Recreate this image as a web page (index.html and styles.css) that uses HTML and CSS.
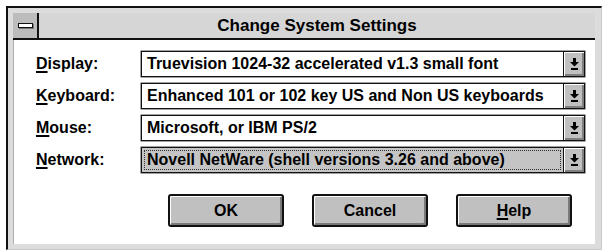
FILE: index.html
```html
<!DOCTYPE html>
<html lang="en">
<head>
    <meta charset="UTF-8">
    <title>Change System Settings</title>
    <link rel="stylesheet" href="styles.css">
</head>
<body>

<div class="window">
    <!-- Title bar -->
    <div class="titlebar">
        <div class="sysmenu"><span class="sysbar"></span></div>
        <div class="title">Change System Settings</div>
    </div>

    <div class="client">
        <div class="fields">
            <label class="label"><u>D</u>isplay:</label>
            <div class="combo">
                <div class="value">Truevision 1024-32 accelerated v1.3 small font</div>
                <div class="drop"><svg width="9" height="12" viewBox="0 0 9 12"><rect x="3" y="0" width="3" height="4" fill="#000"/><polygon points="0,4 9,4 4.5,8.5" fill="#000"/><rect x="1" y="10" width="7" height="2" fill="#000"/></svg></div>
            </div>

            <label class="label"><u>K</u>eyboard:</label>
            <div class="combo">
                <div class="value">Enhanced 101 or 102 key US and Non US keyboards</div>
                <div class="drop"><svg width="9" height="12" viewBox="0 0 9 12"><rect x="3" y="0" width="3" height="4" fill="#000"/><polygon points="0,4 9,4 4.5,8.5" fill="#000"/><rect x="1" y="10" width="7" height="2" fill="#000"/></svg></div>
            </div>

            <label class="label"><u>M</u>ouse:</label>
            <div class="combo">
                <div class="value">Microsoft, or IBM PS/2</div>
                <div class="drop"><svg width="9" height="12" viewBox="0 0 9 12"><rect x="3" y="0" width="3" height="4" fill="#000"/><polygon points="0,4 9,4 4.5,8.5" fill="#000"/><rect x="1" y="10" width="7" height="2" fill="#000"/></svg></div>
            </div>

            <label class="label"><u>N</u>etwork:</label>
            <div class="combo">
                <div class="value focused">Novell NetWare (shell versions 3.26 and above)</div>
                <div class="drop"><svg width="9" height="12" viewBox="0 0 9 12"><rect x="3" y="0" width="3" height="4" fill="#000"/><polygon points="0,4 9,4 4.5,8.5" fill="#000"/><rect x="1" y="10" width="7" height="2" fill="#000"/></svg></div>
            </div>
        </div>

        <div class="buttons">
            <button class="btn default">OK</button>
            <button class="btn">Cancel</button>
            <button class="btn"><u>H</u>elp</button>
        </div>
    </div>
</div>

</body>
</html>
```

FILE: styles.css
```css
body {
    margin: 0;
    background: #fff;
    font-family: "Liberation Sans", Arial, sans-serif;
    font-weight: bold;
    font-size: 16px;
    color: #000;
}

.window {
    margin: 6px 0 0 6px;
    width: 596px;
    height: 244px;
    box-sizing: border-box;
    background: #dcdcdc;
    border-top: 2px solid #111;
    border-left: 2px solid #111;
    border-right: 1px solid #c8c8c8;
    border-bottom: 1px solid #c8c8c8;
    padding: 5px 6px 5px 5px;
    display: flex;
    flex-direction: column;
}

/* Title bar */
.titlebar {
    height: 25px;
    display: flex;
    background: #d6d6d6;
    border-bottom: 2px solid #111;
}

.sysmenu {
    width: 24px;
    background: #bcbcbc;
    border-right: 2px solid #111;
    display: flex;
    align-items: center;
    justify-content: center;
}

.sysbar {
    width: 13px;
    height: 3px;
    background: #fff;
    border: 1px solid #111;
    box-shadow: 1px 1px 0 #777;
}

.title {
    flex: 1;
    text-align: center;
    line-height: 25px;
    font-size: 17px;
}

/* Client area */
.client {
    flex: 1;
    background: #fff;
    border-left: 1px solid #b0b0b0;
    padding: 11px 0 0 22px;
}

.fields {
    display: grid;
    grid-template-columns: 105px 444px;
    grid-auto-rows: 26px;
    row-gap: 6px;
}

.label {
    display: flex;
    align-items: center;
}

u {
    text-decoration-thickness: 2px;
    text-underline-offset: 2px;
}

.combo {
    display: flex;
    border: 1px solid #111;
    box-shadow: 0 0 0 0.5px #444;
}

.value {
    flex: 1;
    padding-left: 5px;
    display: flex;
    align-items: center;
    white-space: nowrap;
}

.value.focused {
    background: #c4c4c4;
    outline: 1px dotted #333;
    outline-offset: -3px;
}

.drop {
    width: 21px;
    border-left: 1px solid #111;
    background: #c0c0c0;
    box-shadow: inset 1px 1px 0 #fff, inset -2px -2px 0 #808080;
    display: flex;
    align-items: center;
    justify-content: center;
    padding-bottom: 1px;
    box-sizing: border-box;
}

/* Buttons */
.buttons {
    display: flex;
    gap: 28px;
    margin: 21px 0 0 132px;
}

.btn {
    width: 116px;
    height: 33px;
    border: 2px solid #111;
    border-radius: 3px;
    background: #c0c0c0;
    box-shadow: inset 1px 1px 0 #fff, inset -2px -2px 0 #7a7a7a;
    font-family: "Liberation Sans", Arial, sans-serif;
    font-weight: bold;
    font-size: 16px;
    color: #000;
    padding: 0;
}

.btn.default {
    border-width: 2px;
}
```
